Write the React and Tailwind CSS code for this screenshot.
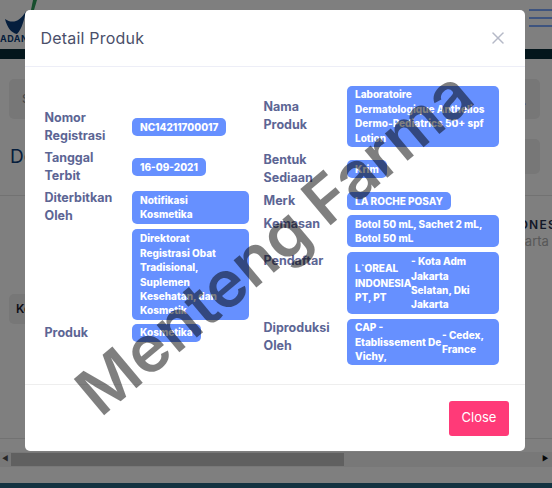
import React from 'react';
import { X, Search } from 'lucide-react';

const leftRows = [
  { label: ['Nomor', 'Registrasi'], value: ['NC14211700017'] },
  { label: ['Tanggal', 'Terbit'], value: ['16-09-2021'] },
  { label: ['Diterbitkan', 'Oleh'], value: ['Notifikasi', 'Kosmetika'] },
  { label: [], value: ['Direktorat', 'Registrasi Obat', 'Tradisional,', 'Suplemen', 'Kesehatan, dan', 'Kosmetik'] },
  { label: ['Produk'], value: ['Kosmetika'] },
];

const rightRows = [
  { label: ['Nama', 'Produk'], value: ['Laboratoire', 'Dermatologique Anthelios', 'Dermo-Pediatrics 50+ spf', 'Lotion'] },
  { label: ['Bentuk', 'Sediaan'], value: ['Krim'] },
  { label: ['Merk'], value: ['LA ROCHE POSAY'], rowClass: 'mt-[1px]' },
  { label: ['Kemasan'], value: ['Botol 50 mL, Sachet 2 mL,', 'Botol 50 mL'], labelClass: 'self-start', rowClass: 'mt-[1px]' },
  {
    label: ['Pendaftar'],
    labelClass: 'self-start',
    rowClass: 'mt-[1px]',
    parts: [
      { width: 'w-[56px]', lines: ['L`OREAL', 'INDONESIA,', 'PT, PT'] },
      { width: 'w-[80px]', lines: ['- Kota Adm', 'Jakarta', 'Selatan, Dki', 'Jakarta'] },
    ],
  },
  {
    label: ['Diproduksi', 'Oleh'],
    labelClass: 'self-start',
    rowClass: 'mt-[1px]',
    parts: [
      { width: 'w-[87px]', lines: ['CAP -', 'Etablissement De', 'Vichy,'] },
      { width: 'w-[48px]', lines: ['- Cedex,', 'France'] },
    ],
  },
];

const Lines = ({ lines }) => lines.map(line => <div key={line} className="whitespace-nowrap">{line}</div>);

const Badge = ({ row }) => {
  const multi = row.parts || row.value.length > 1;
  return (
    <div className={`flex items-center rounded-[5px] bg-[#6690ff] px-2 py-[1.8px] text-[10px] leading-[14.4px] font-extrabold text-white ${multi ? 'w-full' : 'w-fit'}`}>
      {row.parts ? (
        row.parts.map(part => (
          <div key={part.width} className={`${part.width} shrink-0`}>
            <Lines lines={part.lines} />
          </div>
        ))
      ) : (
        <div>
          <Lines lines={row.value} />
        </div>
      )}
    </div>
  );
};

const Rows = ({ rows, labelWidth }) => (
  <div className="flex-1">
    {rows.map(row => (
      <div key={row.value ? row.value[0] : row.label[0]} className={`flex items-center py-[2px] ${row.rowClass || ''}`}>
        <div className={`${labelWidth} shrink-0 text-[12.5px] leading-[18px] font-bold text-[#5c6594] ${row.labelClass || ''}`}>
          <Lines lines={row.label} />
        </div>
        <div className="min-w-0 flex-1">
          <Badge row={row} />
        </div>
      </div>
    ))}
  </div>
);

const App = () => {
  return (
    <div className="relative h-[488px] w-[552px] overflow-hidden bg-white font-['Inter',sans-serif]">
      {/* page behind the modal */}
      <div className="flex h-[49px] items-start justify-between overflow-hidden">
        <div className="relative w-[40px]">
          <svg width="40" height="34" viewBox="0 0 40 34" className="block">
            <path d="M5 19 C12 24 20 22 26 11 C24 20 22 29 17 34 C11 33 7 27 5 19 Z" fill="#0a3d7a" />
            <path d="M33 0 L31 10 L34 10 L37 0 Z" fill="#2e9c5a" />
          </svg>
          <div className="text-[9px] leading-[10px] font-bold tracking-[0.5px] whitespace-nowrap text-[#0a3d7a]">ADAN</div>
        </div>
        <div className="mt-[9px] flex w-[23px] flex-col gap-[6px]">
          <div className="h-[2px] bg-[#7ca8ff]" />
          <div className="h-[2px] bg-[#7ca8ff]" />
          <div className="h-[2px] bg-[#7ca8ff]" />
        </div>
      </div>
      <div className="h-[10px] bg-[#082c38]" />
      <div className="mt-[20px] flex justify-between pr-[12px] pl-[9px]">
        <div className="flex h-[40px] w-[200px] items-center rounded-[5px] bg-[#eeeeee] pl-[13px] text-[12px] text-[#888888]">Search</div>
        <div className="flex h-[40px] w-[40px] items-center justify-center rounded-[5px] bg-[#eeeeee] text-[#7ca8ff]">
          <Search size={14} />
        </div>
      </div>
      <div className="relative mt-[20px] flex h-[35px] justify-between pr-[12px] pl-[10px]">
        <div className="text-[19px] leading-[35px] font-normal text-[#0a3d7a]">Detail Produk</div>
        <div className="w-[40px] rounded-[5px] bg-[#eeeeee]" />
      </div>
      <div className="mt-[21px] border-t border-[#e4e4e4]" />
      <div className="mt-[20px] pl-[494px] text-[12px] leading-[17px] font-semibold tracking-[1.2px] whitespace-nowrap text-[#26304f]">INDONESIA</div>
      <div className="pl-[503px] text-[13px] leading-[17px] whitespace-nowrap text-[#b0b0b0]">Jakarta</div>
      <div className="mt-[44px] ml-[9px] flex h-[30px] w-[120px] items-center rounded-[5px] bg-[#eeeeee] pl-[7px] text-[12px] font-semibold text-[#1a1a2e]">Kemasan</div>
      <div className="mt-[114px] border-t border-[#e4e4e4]" />
      <div className="mt-[13px] flex h-[15px] items-center bg-[#f1f1f1]">
        <div className="w-[11px] pl-[2px] text-[7px] text-[#505050]">◀</div>
        <div className="h-[13px] w-[333px] bg-[#c1c1c1]" />
        <div className="flex-1" />
        <div className="w-[10px] text-[7px] text-[#101010]">▶</div>
      </div>
      <div className="h-[16px]" />
      <div className="h-[5px] bg-[#266480]" />

      {/* modal */}
      <div className="absolute inset-0 bg-black/50 pt-[10px] pl-[25px]">
        <div className="w-[500px] rounded-[5px] bg-white">
          <div className="flex h-[57px] items-center justify-between border-b border-[#edeef7] pr-[17px] pb-[1px] pl-[15.5px]">
            <h5 className="text-[16px] font-normal tracking-[0.2px] text-[#4a4f6a]">Detail Produk</h5>
            <X size={20} strokeWidth={1.8} className="text-[#b5b9c7]" />
          </div>
          <div className="flex h-[318px] items-center border-b border-[#eeeeee] pr-[26px] pl-[19.5px]">
            <div className="flex w-[220.5px] items-center pr-[14.5px]">
              <Rows rows={leftRows} labelWidth="w-[87.5px]" />
            </div>
            <div className="flex flex-1 items-center">
              <Rows rows={rightRows} labelWidth="w-[83.5px]" />
            </div>
          </div>
          <div className="flex h-[66px] items-center justify-end pr-[16px]">
            <button className="h-[35px] w-[60px] rounded-[3px] bg-[#ff3a78] text-[13px] text-white">Close</button>
          </div>
        </div>
      </div>

      {/* watermark */}
      <div className="absolute top-[242px] left-[274px] -translate-x-1/2 -translate-y-1/2 -rotate-[40deg] text-[65px] leading-none font-semibold whitespace-nowrap text-black/50">
        Menteng Farma
      </div>
    </div>
  );
};

export default App;
